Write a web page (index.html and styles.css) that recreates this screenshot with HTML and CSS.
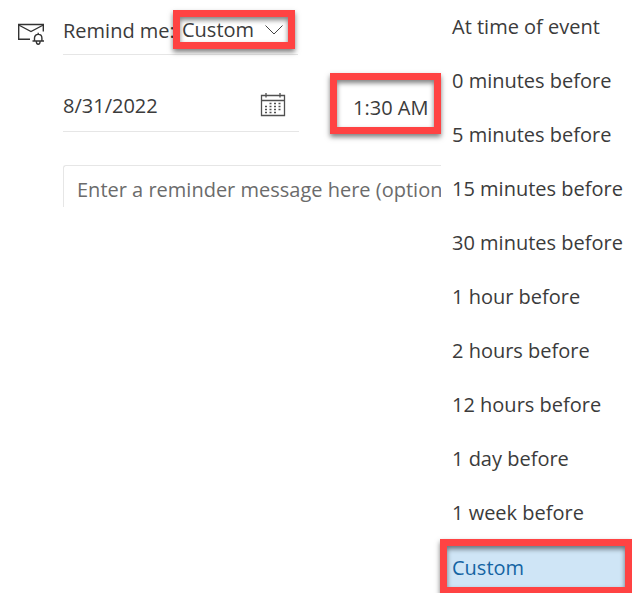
FILE: index.html
```
<!DOCTYPE html>
<html lang="en">
<head>
    <meta charset="UTF-8">
    <meta name="viewport" content="width=device-width, initial-scale=1.0">
    <title>Reminder</title>
    <link rel="stylesheet" href="styles.css">
</head>
<body>
    <div class="page">
        <form class="reminder">
            <svg class="mail-icon" width="28" height="26" viewBox="0 0 28 26" fill="none" stroke="#333" stroke-width="1.4">
                <path d="M13 18.3H1.7V3.5H26.3V10.5"/>
                <path d="M1.7 4L14 10.5L26.3 4"/>
                <path d="M15.5 20H27M17.5 19.7V17C17.5 14.8 19 13.4 21.2 13.4S24.9 14.8 24.9 17V19.7M21.2 13.4V11.8M19.3 20.2C19.3 24.2 23.1 24.2 23.1 20.2"/>
            </svg>
            <div class="fields">
                <div class="remind-row">
                    <label for="remind">Remind me:</label>
                    <div class="select-box marked">
                        <select id="remind" name="remind">
                            <option>Custom</option>
                        </select>
                        <svg class="chevron" width="18" height="10" viewBox="0 0 18 10" fill="none" stroke="#444">
                            <path d="M0.5 0.5L9 9L17.5 0.5"/>
                        </svg>
                    </div>
                </div>

                <div class="when-row">
                    <div class="date-box">
                        <input type="text" id="date" name="date" value="8/31/2022" aria-label="Date">
                        <svg width="26" height="24" viewBox="0 0 26 24" fill="none" stroke="#505050">
                            <path stroke-width="1.3" d="M1.5 2.5H24.5V22.5H1.5ZM1.5 7.5H24.5M6 0V4.5M20 0V4.5"/>
                            <path stroke-width="1.7" stroke-dasharray="2 2.5" d="M9.5 10.5H21M5 13.5H21M5 16.5H21M5 19.5H16.5"/>
                        </svg>
                    </div>
                    <div class="time-box marked">
                        <input type="text" id="time" name="time" value="1:30 AM" aria-label="Time">
                    </div>
                </div>

                <input class="message" type="text" id="note" name="note" placeholder="Enter a reminder message here (optional)" aria-label="Reminder message">
            </div>
        </form>

        <div class="menu">
            <button type="button">At time of event</button>
            <button type="button">0 minutes before</button>
            <button type="button">5 minutes before</button>
            <button type="button">15 minutes before</button>
            <button type="button">30 minutes before</button>
            <button type="button">1 hour before</button>
            <button type="button">2 hours before</button>
            <button type="button">12 hours before</button>
            <button type="button">1 day before</button>
            <button type="button">1 week before</button>
            <button type="button" class="selected marked">Custom</button>
        </div>
    </div>
</body>
</html>
```
FILE: styles.css
```
* { box-sizing: border-box; }
body { margin: 0; background: #fff; color: #3b3b3b; font-family: "Open Sans", "Noto Sans", sans-serif; font-size: 20px; line-height: 28px; }
input, select, button { font: inherit; color: inherit; border: none; background: none; padding: 0; margin: 0; min-width: 0; border-radius: 0; }

.page { display: flex; align-items: flex-start; }
.marked { border: 7px solid #ff4343; box-shadow: 0 3px 5px rgba(0, 0, 0, 0.5), inset 0 3px 5px rgba(0, 0, 0, 0.5); }

.reminder { flex: 1; min-width: 0; display: flex; gap: 18px; padding-left: 17px; }
.mail-icon { flex: none; margin-top: 21px; }
.fields { flex: 1; min-width: 0; }

.remind-row { display: flex; align-items: center; width: 235px; height: 55px; padding-top: 5px; border-bottom: 1px solid #e6e6e6; }
.remind-row label { width: 110px; padding-top: 2px; white-space: nowrap; }
.select-box { display: flex; align-items: center; flex: none; width: 122px; height: 39px; padding: 1px 5px 0 0; }
.select-box select { flex: 1; appearance: none; padding-left: 2px; height: 24px; line-height: 24px; }
.chevron { flex: none; pointer-events: none; }

.when-row { display: flex; gap: 31px; margin-top: 18px; }
.date-box { flex: 1; min-width: 0; display: flex; align-items: center; height: 59px; padding: 5px 13px 0 0; border-bottom: 1px solid #e6e6e6; }
.date-box input { flex: 1; padding-top: 3px; }
.time-box { display: flex; flex: none; width: 111px; height: 61px; padding: 8px 0 0 16px; }
.time-box input { width: 100%; }

.message { display: block; width: 100%; height: 42px; margin-top: 31px; padding: 6px 0 0 13px; border: 1px solid #e6e6e6; border-width: 1px 0 0 1px; border-radius: 3px 0 0 0; }
.message::placeholder { color: #6b6b6b; opacity: 1; }

.menu { flex: none; width: 191px; display: flex; flex-direction: column; }
.menu button { height: 54px; padding-left: 11px; text-align: left; white-space: nowrap; }
.menu .selected { height: 55px; margin: -1px 0 0 -1px; padding: 2px 0 0 5px; background: #cfe5f6; color: #1464a3; }
```
